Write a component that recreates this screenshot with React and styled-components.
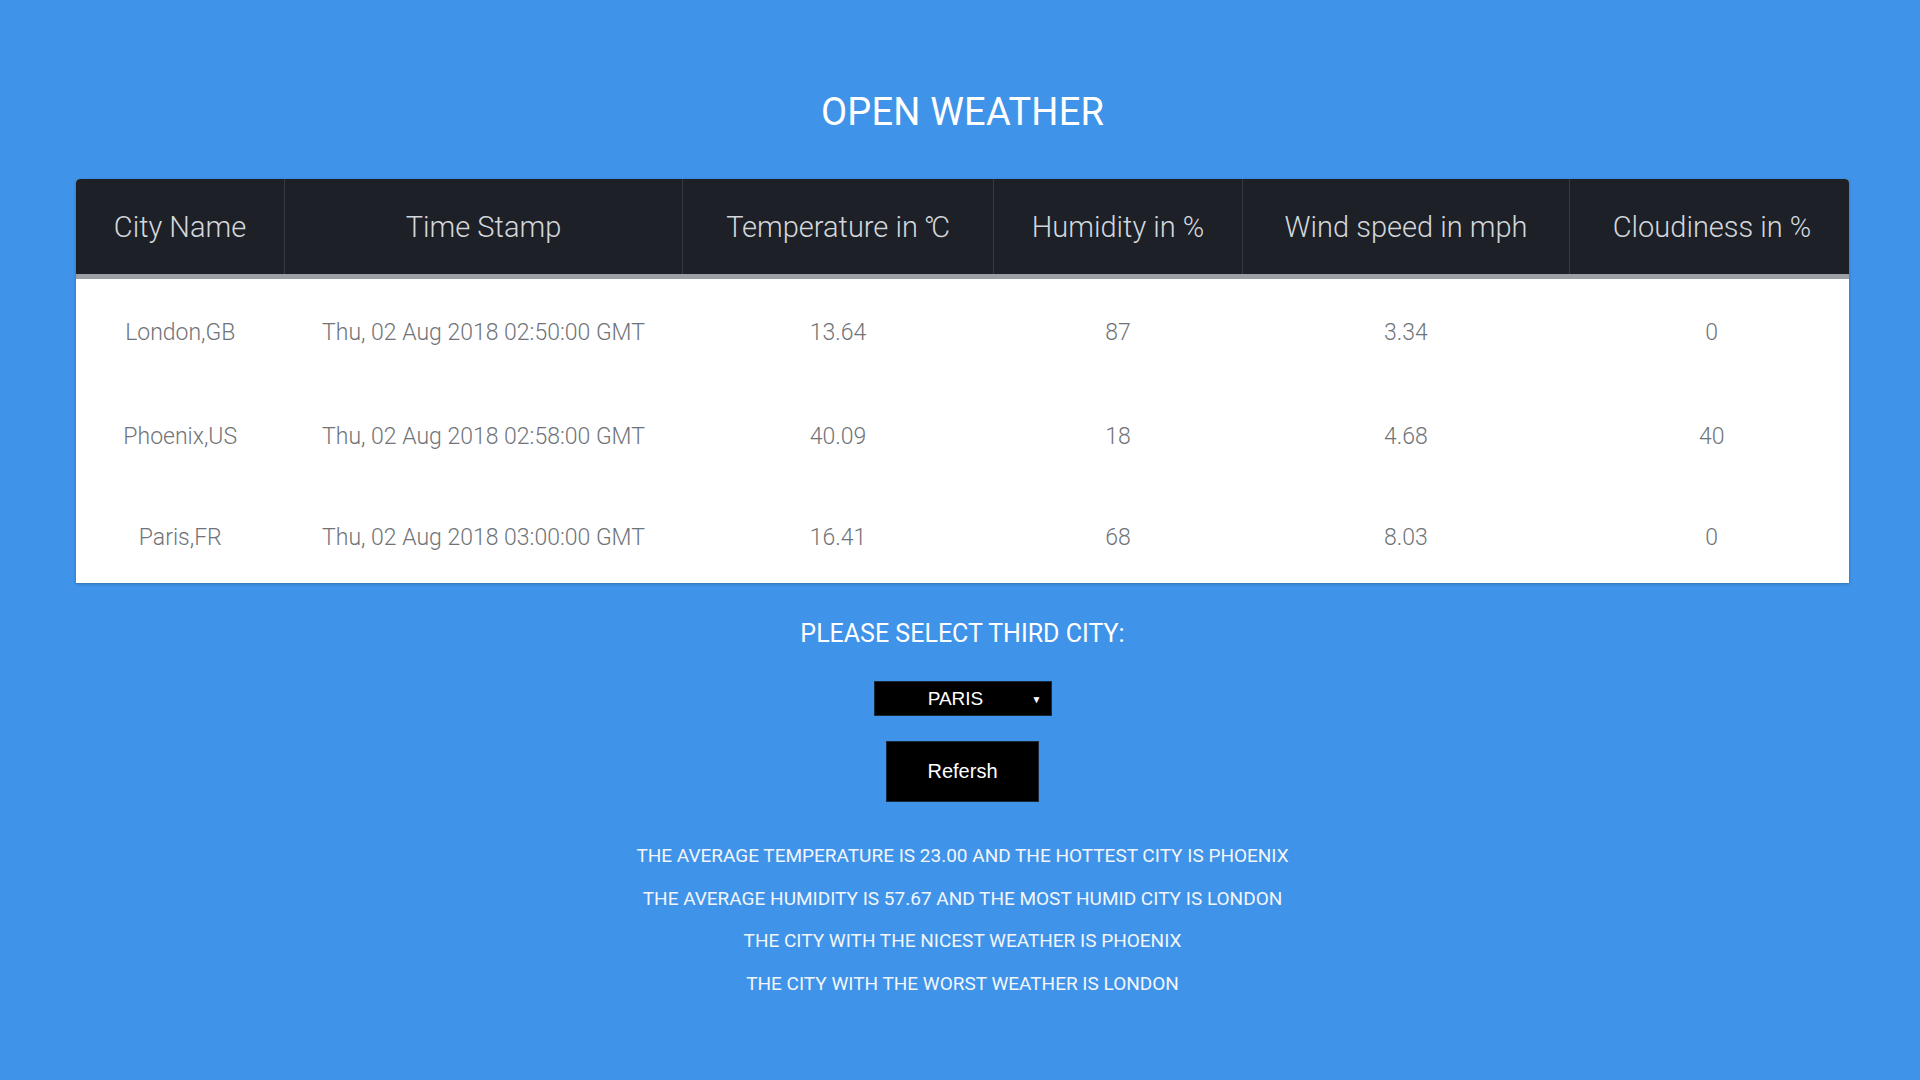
import React from "react";
import styled, { createGlobalStyle } from "styled-components";

const Global = createGlobalStyle`
  html, body { margin: 0; padding: 0; }
  body {
    background: #3f93e9;
    font-family: Roboto, "Noto Sans", sans-serif;
    min-height: 1080px;
  }
`;

const Page = styled.div`
  display: flex;
  flex-direction: column;
  align-items: center;
  padding: 89px 71px 60px 76px;
  color: #fff;
`;

const Title = styled.h1`
  margin: 0 0 44px;
  font-size: 38px;
  line-height: 46px;
  font-weight: 400;
  letter-spacing: 0.2px;
`;

const Card = styled.div`
  align-self: stretch;
  background: #fff;
  border-radius: 4px 4px 0 0;
  overflow: hidden;
  box-shadow: 0 1px 3px rgba(0, 0, 0, 0.25);
`;

const Table = styled.table`
  width: 100%;
  border-collapse: collapse;
  table-layout: fixed;
`;

const Th = styled.th`
  width: ${(p) => p.$w}px;
  height: 95px;
  padding: 0;
  background: #1d2027;
  color: #d3d7dc;
  font-family: "Roboto Light", Roboto, sans-serif;
  font-weight: 300;
  font-size: 29px;
  text-align: center;
  vertical-align: middle;
  border-left: 1px solid #343a40;
  border-bottom: 5px solid #9ba0a6;
  &:first-child { border-left: none; }
`;

const Td = styled.td`
  height: ${(p) => p.$h}px;
  padding: ${(p) => p.$pt}px 0 0;
  text-align: center;
  vertical-align: middle;
  color: #707479;
  font-family: "Roboto Light", Roboto, sans-serif;
  font-weight: 300;
  font-size: 23px;
`;

const Subtitle = styled.h2`
  margin: 36px 0 32px;
  font-size: 25px;
  line-height: 30px;
  font-weight: 400;
`;

const SelectBox = styled.div`
  position: relative;
  width: 178px;
  height: 35px;
  padding-right: 14px;
  background: #000;
  border: 1px solid #1a2a3a;
  box-sizing: border-box;
  display: flex;
  align-items: center;
  justify-content: center;
  font-family: "Liberation Sans", Arial, sans-serif;
  font-size: 19px;
  color: #fff;
`;

const Caret = styled.span`
  position: absolute;
  right: 9px;
  top: 50%;
  transform: translateY(-50%);
  font-size: 10px;
`;

const Button = styled.button`
  margin-top: 25px;
  width: 153px;
  height: 61px;
  background: #000;
  color: #fff;
  border: 1px solid #1a2a3a;
  font-family: "Liberation Sans", Arial, sans-serif;
  font-size: 20px;
  cursor: pointer;
`;

const Stats = styled.div`
  margin-top: 33px;
  display: flex;
  flex-direction: column;
  align-items: center;
`;

const StatLine = styled.p`
  margin: 0;
  font-size: 19px;
  line-height: 42.5px;
  font-weight: 400;
  color: #f2f6fb;
`;

const cols = [
  ["City Name", 208],
  ["Time Stamp", 397],
  ["Temperature in \u2103", 310],
  ["Humidity in %", 248],
  ["Wind speed in mph", 326],
  ["Cloudiness in %", 284],
];

const rows = [
  ["London,GB", "Thu, 02 Aug 2018 02:50:00 GMT", "13.64", "87", "3.34", "0"],
  ["Phoenix,US", "Thu, 02 Aug 2018 02:58:00 GMT", "40.09", "18", "4.68", "40"],
  ["Paris,FR", "Thu, 02 Aug 2018 03:00:00 GMT", "16.41", "68", "8.03", "0"],
];

const rowBoxes = [
  { h: 106, pt: 0 },
  { h: 102, pt: 0 },
  { h: 92, pt: 4 },
];

const stats = [
  "THE AVERAGE TEMPERATURE IS 23.00 AND THE HOTTEST CITY IS PHOENIX",
  "THE AVERAGE HUMIDITY IS 57.67 AND THE MOST HUMID CITY IS LONDON",
  "THE CITY WITH THE NICEST WEATHER IS PHOENIX",
  "THE CITY WITH THE WORST WEATHER IS LONDON",
];

export default function App() {
  return (
    <>
      <Global />
      <Page>
        <Title>OPEN WEATHER</Title>
        <Card>
          <Table>
            <thead>
              <tr>
                {cols.map(([c, w]) => (
                  <Th key={c} $w={w}>{c}</Th>
                ))}
              </tr>
            </thead>
            <tbody>
              {rows.map((r, i) => (
                <tr key={i}>
                  {r.map((v, j) => (
                    <Td key={j} $h={rowBoxes[i].h} $pt={rowBoxes[i].pt}>{v}</Td>
                  ))}
                </tr>
              ))}
            </tbody>
          </Table>
        </Card>
        <Subtitle>PLEASE SELECT THIRD CITY:</Subtitle>
        <SelectBox>
          PARIS
          <Caret>▼</Caret>
        </SelectBox>
        <Button>Refersh</Button>
        <Stats>
          {stats.map((s) => (
            <StatLine key={s}>{s}</StatLine>
          ))}
        </Stats>
      </Page>
    </>
  );
}
